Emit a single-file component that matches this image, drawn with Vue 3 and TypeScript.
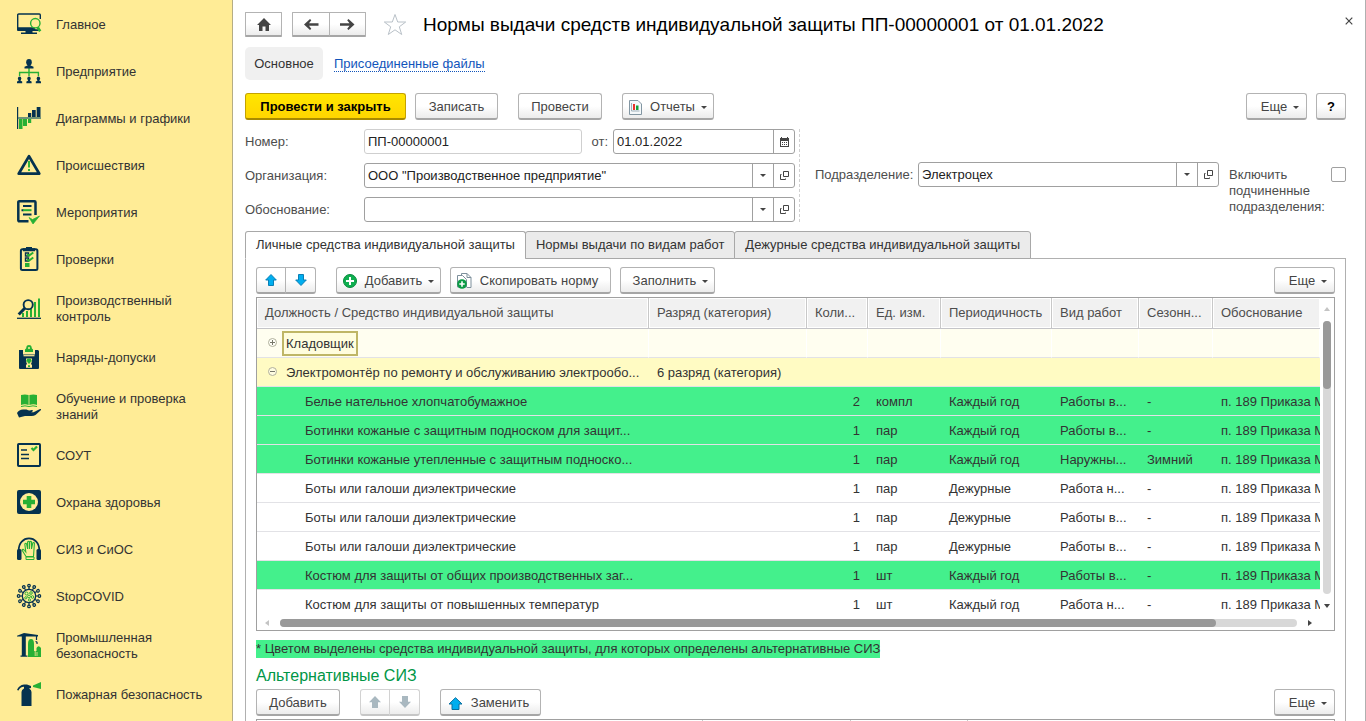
<script setup lang="ts">
import { ref } from 'vue'

interface NavItem { label: string; icon: string }
interface Row {
  name: string
  rank?: string
  qty?: string
  unit?: string
  period?: string
  work?: string
  season?: string
  kind: 'current' | 'group' | 'marked' | 'plain'
  toggle?: 'plus' | 'minus'
}

const N = '#05324f'
const G = '#27b034'

const person = (x: number) =>
  `<g fill="${N}"><ellipse cx="${x}" cy="19.500" rx="1.700" ry="2"/><path d="M${x - 1} 20.500h2v1.200l1.600 .8V24.300h-5.200v-1.800l1.600-.8z"/></g>`

const spikes = Array.from({ length: 12 }, (_, i) =>
  `<g transform="rotate(${i * 30} 12 12)"><path d="M12 5V3" stroke="${N}" stroke-width="1.2"/><circle cx="12" cy="1.6" r="1.3" fill="none" stroke="${N}" stroke-width="1.2"/></g>`).join('')

const nav: NavItem[] = [
  { label: 'Главное', icon: `<path d="M.7 16V3a1 1 0 0 1 1-1h20.600a1 1 0 0 1 1 1v4" fill="none" stroke="${N}" stroke-width="1.400"/><path d="M0 15.200h17l1.500 2H22v.8a1 1 0 0 1-1 1H1a1 1 0 0 1-1-1z" fill="${N}"/><path d="M8.500 19h7v1.500H20V22H4v-1.500h4.500z" fill="${N}"/><circle cx="18.300" cy="11.200" r="4.700" fill="none" stroke="${G}" stroke-width="1.400"/><path d="M20.800 15.500l2.400 3.800" stroke="${G}" stroke-width="2.600"/>` },
  { label: 'Предприятие', icon: `<path d="M12 9v8M2.600 17v-3.500h18.800V17" fill="none" stroke="${G}" stroke-width="1.400"/><g fill="${N}"><ellipse cx="12" cy="3.200" rx="2.800" ry="3.200"/><path d="M10.500 4h3v2.600l3 1.200V9.600h-9V7.800l3-1.200z"/></g>${person(2.6)}${person(12)}${person(21.4)}` },
  { label: 'Диаграммы и графики', icon: `<path d="M.6 1v22" stroke="${N}" stroke-width="1.200"/><path d="M11 7h3.200v4H11zM15 4h3.700v7H15zM19.700 1H23.500v10h-3.800z" fill="${N}"/><path d="M2 13h3.500v10H2zM6 13h4v7H6zM11 13h3.200v4H11z" fill="${G}"/><path d="M1 12h23" stroke="#6f9377" stroke-width="2"/>` },
  { label: 'Происшествия', icon: `<path d="M12 3.200L22.300 20.700H1.700z" fill="none" stroke="${N}" stroke-width="2.700" stroke-linejoin="round"/><path d="M12 8v6.500M12 16v2" stroke="${G}" stroke-width="1.900"/>` },
  { label: 'Мероприятия', icon: `<path d="M11.500 21.300H2.300a1 1 0 0 1-1-1V2.200a1 1 0 0 1 1-1h15.200a1 1 0 0 1 1 1V15" fill="none" stroke="${N}" stroke-width="2.500"/><path d="M6 6h8.500M4.500 10.200h2M6 14.500h8.500" stroke="${N}" stroke-width="2"/><path d="M6 10.200h8.500" stroke="${G}" stroke-width="2"/><path d="M12 17.500l3.500 2 7-3.500-6.500 8z" fill="${G}" stroke="${G}" stroke-width=".7"/>` },
  { label: 'Проверки', icon: `<rect x="3.900" y="2.200" width="16.500" height="20.800" rx="1.500" fill="none" stroke="${N}" stroke-width="2"/><path d="M9 0h6v1.200h3v3H6v-3h3z" fill="${N}"/><path d="M8.500 6h3v3h-3zM8.500 11h3v3h-3z" fill="none" stroke="${N}" stroke-width="1.400"/><path d="M10 7.300l1.800 1.500 4.500-3.300M10 12.300l1.800 1.500 4.500-3.300" fill="none" stroke="${G}" stroke-width="2"/><path d="M8 16h4.500v4H8z" fill="${G}"/>` },
  { label: 'Производственный контроль', icon: `<path d="M6 17v4M10 15v6M14 12v9M18 6v15M22 2.500v18.500" stroke="${G}" stroke-width="2"/><path d="M0 22.300h24" stroke="${N}" stroke-width="1.300"/><circle cx="11.200" cy="8.700" r="4.600" fill="#ffec96" stroke="${N}" stroke-width="1.900"/><path d="M8 12l-6.300 6.500" stroke="${N}" stroke-width="3"/>` },
  { label: 'Наряды-допуски', icon: `<path d="M2 5h4v4.500h12V5h3l1 1v17a1 1 0 0 1-1 1H3a1 1 0 0 1-1-1z" fill="${N}"/><path d="M6.500 10.700h11" stroke="#ffec96" stroke-width="1.200"/><path d="M9 13.500h6v3l-1 2.500 1 1V22.800H9V20l1-1-1-2.500z" fill="#ffec96"/><path d="M9.300 16c0-3.300 5.400-3.300 5.400 0v.8h-1.200l-.5 1.700h-2l-.5-1.700H9.300zM11 20.300h2v1.700h-2zM8 7V4.500C8.500 3.500 9.300 4 9.300 2.500c0-3.300 5.400-3.300 5.400 0 0 1.500.8 1 1.300 2V7z" fill="${G}"/><circle cx="12" cy="3" r="1" fill="#ffec96"/>` },
  { label: 'Обучение и проверка знаний', icon: `<path d="M4 1q4-1.200 7.600 0v10q-3.600-1.500-7.600 0zM12.400 1q4-1.200 7.600 0v10q-3.600-1.500-7.600 0z" fill="${G}"/><path d="M4 12.500q4-1.300 8 0 4-1.300 8 0" fill="none" stroke="${G}"/><path d="M0 19q2-3.500 6-3.500h3.500q2.500 1.500 5.500.5c1.500 0 1 2-1 2.200h-3 5.500l6-3q2-.5 1.500.8l-5.500 5q-1.500 1-4 1H8l-6 1.500z" fill="${N}"/>` },
  { label: 'СОУТ', icon: `<rect x="1" y="1" width="22" height="22" rx=".8" fill="none" stroke="${N}" stroke-width="2"/><path d="M4 7h6M4 11.500h8M4 15.500h8" stroke="${N}" stroke-width="1.600"/><path d="M14.500 5l2 2 3.500-3.500" fill="none" stroke="${G}" stroke-width="2.200"/>` },
  { label: 'Охрана здоровья', icon: `<rect width="24" height="24" rx="2" fill="${N}"/><circle cx="12" cy="12" r="9" fill="#ffec96"/><path d="M9.700 6h4.600v3.700H18v4.600h-3.700V18H9.700v-3.700H6V9.700h3.700z" fill="${G}"/>` },
  { label: 'СИЗ и СиОС', icon: `<path d="M1.700 14C1 -2.800 23 -2.800 22.300 14" fill="none" stroke="${N}" stroke-width="1.700"/><rect y="12" width="4.500" height="11" rx="1.500" fill="${N}"/><rect x="19.500" y="12" width="4.500" height="11" rx="1.500" fill="${N}"/><path d="M9 19.500L5 13q1-1.500 2.500.5l1.300 1.500L7.800 7q1-1.500 1.800 0l1 5V5q1-1.500 1.800 0v7l.4-7q1-1.500 1.700 0v7l1.300-6q1-1 1.600.3L16.500 19.500z" fill="none" stroke="${G}" stroke-width="1.100"/><path d="M9 20h8v2.500H9z" fill="none" stroke="${G}"/>` },
  { label: 'StopCOVID', icon: `${spikes}<circle cx="12" cy="12" r="6.700" fill="none" stroke="${N}" stroke-width="1.300"/><g fill="none" stroke="${G}" stroke-width="1"><circle cx="9.500" cy="9.500" r="1.500"/><circle cx="14" cy="9" r="1.300"/><circle cx="12" cy="12.500" r="1.400"/><circle cx="8.800" cy="13.800" r="1.100"/><circle cx="15.500" cy="13" r="1.300"/><circle cx="12.500" cy="16" r="1.100"/></g>` },
  { label: 'Промышленная безопасность', icon: `<path d="M0 2.700L7 0 21 2v1.500H0zM4.800 3.300h4V23h-4z" fill="${N}"/><path d="M3.500 23.200h7M19.500 3v4M18.500 8.500q2 0 1.500 2.500" fill="none" stroke="${N}" stroke-width="1.200"/><path d="M11 24V11q0-5 3-5t3 5v7h2.500v-3q2-3.500 4.500 0v9z" fill="${G}"/><path d="M18.200 17v6M20 19v4" stroke="#ffec96" stroke-width=".8"/>` },
  { label: 'Пожарная безопасность', icon: `<path d="M4.500 24V10q0-2.500 2.500-3.500V4.800Q3 5 1.500 8.500L0 8Q2 3 7 2.500h3L14 4v2l-2 .5q2.500 1 2.500 3.500v14z" fill="${N}"/><path d="M16 3.500L24 0v7L16 5z" fill="${G}"/>` }
]

const rows: Row[] = [
  { name: 'Кладовщик', kind: 'current', toggle: 'plus' },
  { name: 'Электромонтёр по ремонту и обслуживанию электрообо...', rank: '6 разряд (категория)', kind: 'group', toggle: 'minus' },
  { name: 'Белье нательное хлопчатобумажное', qty: '2', unit: 'компл', period: 'Каждый год', work: 'Работы в...', season: '-', kind: 'marked' },
  { name: 'Ботинки кожаные с защитным подноском для защит...', qty: '1', unit: 'пар', period: 'Каждый год', work: 'Работы в...', season: '-', kind: 'marked' },
  { name: 'Ботинки кожаные утепленные с защитным подноско...', qty: '1', unit: 'пар', period: 'Каждый год', work: 'Наружны...', season: 'Зимний', kind: 'marked' },
  { name: 'Боты или галоши диэлектрические', qty: '1', unit: 'пар', period: 'Дежурные', work: 'Работа н...', season: '-', kind: 'plain' },
  { name: 'Боты или галоши диэлектрические', qty: '1', unit: 'пар', period: 'Дежурные', work: 'Работы в...', season: '-', kind: 'plain' },
  { name: 'Боты или галоши диэлектрические', qty: '1', unit: 'пар', period: 'Дежурные', work: 'Работы в...', season: '-', kind: 'plain' },
  { name: 'Костюм для защиты от общих производственных заг...', qty: '1', unit: 'шт', period: 'Каждый год', work: 'Работы в...', season: '-', kind: 'marked' },
  { name: 'Костюм для защиты от повышенных температур', qty: '1', unit: 'шт', period: 'Каждый год', work: 'Работа н...', season: '-', kind: 'plain' }
]
const basisText = 'п. 189 Приказа М'

const docNumber = ref('ПП-00000001')
const docDate = ref('01.01.2022')
const organization = ref('ООО "Производственное предприятие"')
const reason = ref('')
const department = ref('Электроцех')
const includeChildren = ref(false)
</script>

<template>
  <div class="app">
    <nav class="side">
      <a v-for="item in nav" :key="item.label" href="#" class="side-item">
        <svg class="side-icon" viewBox="0 0 24 24" v-html="item.icon"></svg>
        <span>{{ item.label }}</span>
      </a>
    </nav>

    <main class="main">
      <header class="head">
        <button class="btn home" aria-label="Начальная страница">
          <svg width="14" height="13" viewBox="0 0 14 13"><path d="M7 0l7 7h-2v6H8.500V8.500h-3V13H2V7H0z" fill="#444" /></svg>
        </button>
        <div class="pair">
          <button class="btn" aria-label="Назад">
            <svg width="15" height="11" viewBox="0 0 15 11"><path d="M0 5.500L6 0l1.300 1.300-2.300 3H14.500v2.400H5l2.300 3L6 11z" fill="#444" /></svg>
          </button>
          <button class="btn" aria-label="Вперед">
            <svg width="15" height="11" viewBox="0 0 15 11"><path d="M14.500 5.500L8.500 0 7.200 1.300l2.300 3H0v2.400h9.500l-2.300 3L8.500 11z" fill="#444" /></svg>
          </button>
        </div>
        <button class="bare star" aria-label="В избранное">
          <svg width="24" height="23" viewBox="0 0 24 23"><path d="M12 1.500l2.700 7.500h8l-6.400 4.800 2.400 7.700-6.700-4.700-6.700 4.700 2.400-7.700L1.300 9h8z" fill="#fff" stroke="#b9c1c8" /></svg>
        </button>
        <h1>Нормы выдачи средств индивидуальной защиты ПП-00000001 от 01.01.2022</h1>
        <button class="bare close" aria-label="Закрыть">
          <svg width="8" height="8" viewBox="0 0 8 8"><path d="M.7.7l6.600 6.600M7.300.7L.7 7.300" stroke="#444" stroke-width="1.200" /></svg>
        </button>
      </header>

      <div class="sections">
        <span class="section-on">Основное</span>
        <a href="#">Присоединенные файлы</a>
      </div>

      <div class="bar commands">
        <button class="btn primary">Провести и закрыть</button>
        <button class="btn save">Записать</button>
        <button class="btn apart post">Провести</button>
        <button class="btn apart reports">
          <svg width="13" height="15" viewBox="0 0 13 15"><path d="M.5.500h8.500l3.500 3.500v10.500H.5z" fill="#f4f8fa" stroke="#8296a2" /><path d="M2.500 3v8h8" fill="none" stroke="#9fb0ba" /><path d="M4 4h2v6H4z" fill="#e8332a" /><path d="M7 5.500h2.500V10H7z" fill="#17a13a" /></svg>
          Отчеты<i class="caret"></i>
        </button>
        <span class="fill"></span>
        <button class="btn more">Еще<i class="caret"></i></button>
        <button class="btn help">?</button>
      </div>

      <div class="form">
        <div class="form-left">
          <div class="line">
            <label class="lbl" for="num">Номер:</label>
            <div class="field soft number"><input id="num" v-model="docNumber" type="text"></div>
            <label class="from" for="date">от:</label>
            <div class="field date">
              <input id="date" v-model="docDate" type="text">
              <button aria-label="Календарь">
                <svg width="9" height="10" viewBox="0 0 9 10"><path d="M1 0h1v1h5V0h1v1h1v9H0V1h1z" fill="#444" /><path d="M1 4h7v5H1z" fill="#fff" /><path d="M2 5h1v1H2zM4 5h1v1H4zM6 5h1v1H6zM2 7h1v1H2zM4 7h1v1H4zM6 7h1v1H6z" fill="#444" /></svg>
              </button>
            </div>
          </div>
          <div class="line">
            <label class="lbl" for="org">Организация:</label>
            <div class="field grow">
              <input id="org" v-model="organization" type="text">
              <button aria-label="Выбрать"><i class="caret"></i></button>
              <button aria-label="Открыть"><svg width="9" height="9" viewBox="0 0 9 9"><path d="M3.500.5h5v5h-5zM1.500 3.500h-1v5h5v-1" fill="none" stroke="#444" /></svg></button>
            </div>
          </div>
          <div class="line">
            <label class="lbl" for="reason">Обоснование:</label>
            <div class="field grow">
              <input id="reason" v-model="reason" type="text">
              <button aria-label="Выбрать"><i class="caret"></i></button>
              <button aria-label="Открыть"><svg width="9" height="9" viewBox="0 0 9 9"><path d="M3.500.5h5v5h-5zM1.500 3.500h-1v5h5v-1" fill="none" stroke="#444" /></svg></button>
            </div>
          </div>
        </div>
        <div class="form-right">
          <label class="dep" for="dep">Подразделение:</label>
          <div class="field grow">
            <input id="dep" v-model="department" type="text">
            <button aria-label="Выбрать"><i class="caret"></i></button>
            <button aria-label="Открыть"><svg width="9" height="9" viewBox="0 0 9 9"><path d="M3.500.5h5v5h-5zM1.500 3.500h-1v5h5v-1" fill="none" stroke="#444" /></svg></button>
          </div>
          <label class="include" for="include">Включить подчиненные подразделения:</label>
          <input id="include" v-model="includeChildren" class="check" type="checkbox">
        </div>
      </div>

      <div class="tabs" role="tablist">
        <button role="tab" aria-selected="true" class="tab on">Личные средства индивидуальной защиты</button>
        <button role="tab" aria-selected="false" class="tab">Нормы выдачи по видам работ</button>
        <button role="tab" aria-selected="false" class="tab">Дежурные средства индивидуальной защиты</button>
      </div>

      <section class="panel">
        <div class="bar">
          <div class="pair narrow">
            <button class="btn" aria-label="Вверх"><svg width="12" height="12" viewBox="0 0 12 12"><path d="M6 .5L11.300 6H8.500v5.500h-5V6H.7z" fill="#00aeef" stroke="#0a7fb5" /></svg></button>
            <button class="btn" aria-label="Вниз"><svg width="12" height="12" viewBox="0 0 12 12"><path d="M6 11.500L.7 6h2.800V.500h5V6h2.800z" fill="#00aeef" stroke="#0a7fb5" /></svg></button>
          </div>
          <button class="btn apart add">
            <svg width="14" height="14" viewBox="0 0 14 14"><circle cx="7" cy="7" r="6.500" fill="#0faf50" stroke="#078a3c" /><path d="M7 3v8M3 7h8" stroke="#fff" stroke-width="2" /></svg>
            Добавить<i class="caret"></i>
          </button>
          <button class="btn copy">
            <svg width="15" height="16" viewBox="0 0 15 16"><path d="M4.500 2.500V.500h5.500l4 4v10h-4" fill="#fff" stroke="#7d8f9b" /><path d="M10 .5v4h4" fill="none" stroke="#7d8f9b" /><path d="M.5 14V2.500h5l4 4V14z" fill="#fff" stroke="#7d8f9b" /><circle cx="5" cy="11" r="4.800" fill="#0b9b45" /><path d="M5 8.300v5.400M2.300 11h5.400" stroke="#fff" stroke-width="1.600" /></svg>
            Скопировать норму
          </button>
          <button class="btn fillbtn">Заполнить<i class="caret"></i></button>
          <span class="fill"></span>
          <button class="btn more">Еще<i class="caret"></i></button>
        </div>

        <div class="grid">
          <div class="grid-body">
            <table>
              <colgroup>
                <col><col class="c-rank"><col class="c-qty"><col class="c-unit"><col class="c-period"><col class="c-work"><col class="c-season"><col class="c-basis">
              </colgroup>
              <thead>
                <tr>
                  <th>Должность / Средство индивидуальной защиты</th>
                  <th>Разряд (категория)</th>
                  <th>Коли...</th>
                  <th>Ед. изм.</th>
                  <th>Периодичность</th>
                  <th>Вид работ</th>
                  <th>Сезонн...</th>
                  <th>Обоснование</th>
                </tr>
              </thead>
              <tbody>
                <tr v-for="(row, i) in rows" :key="i" :class="row.kind">
                  <td :class="row.toggle ? 'parent' : 'child'">
                    <button v-if="row.toggle" class="bare toggle" :aria-label="row.toggle === 'plus' ? 'Развернуть' : 'Свернуть'">
                      <svg width="9" height="9" viewBox="0 0 9 9">
                        <circle cx="4.500" cy="4.500" r="4" fill="#fff" fill-opacity=".5" stroke="#b0b09c" />
                        <path :d="row.toggle === 'plus' ? 'M2 4.500h5M4.500 2v5' : 'M2 4.500h5'" stroke="#77776a" />
                      </svg>
                    </button>
                    <span class="name">{{ row.name }}</span>
                  </td>
                  <td>{{ row.rank }}</td>
                  <td class="num">{{ row.qty }}</td>
                  <td>{{ row.unit }}</td>
                  <td>{{ row.period }}</td>
                  <td>{{ row.work }}</td>
                  <td>{{ row.season }}</td>
                  <td class="basis">{{ row.toggle ? '' : basisText }}</td>
                </tr>
              </tbody>
            </table>
            <div class="vscroll">
              <i class="tri up"></i>
              <div class="vtrack"><div class="vthumb"></div></div>
              <i class="tri down"></i>
            </div>
          </div>
          <div class="hscroll">
            <i class="tri left"></i>
            <div class="htrack"><div class="hthumb"></div></div>
            <i class="tri right"></i>
          </div>
        </div>

        <p class="note"><span>* Цветом выделены средства индивидуальной защиты, для которых определены альтернативные СИЗ</span></p>
        <h2>Альтернативные СИЗ</h2>

        <div class="bar">
          <button class="btn post">Добавить</button>
          <div class="pair narrow apart">
            <button class="btn" disabled aria-label="Вверх"><svg width="12" height="12" viewBox="0 0 12 12"><path d="M6 0l6 6.200H9V12H3V6.200H0z" fill="#a9b8c0" /></svg></button>
            <button class="btn" disabled aria-label="Вниз"><svg width="12" height="12" viewBox="0 0 12 12"><path d="M6 12L0 5.800h3V0h6v5.800h3z" fill="#a9b8c0" /></svg></button>
          </div>
          <button class="btn apart replace">
            <svg width="15" height="13" viewBox="0 0 15 13"><path d="M7.500.7L14 7h-3v5.500H4V7H1z" fill="#00aeef" stroke="#0a6f9f" /></svg>
            Заменить
          </button>
          <span class="fill"></span>
          <button class="btn more">Еще<i class="caret"></i></button>
        </div>
        <div class="grid second"><span></span><span></span><span></span><span></span></div>
      </section>
    </main>
  </div>
</template>

<style>
body { margin: 0; overflow: hidden; }
</style>

<style scoped>
.app {
  display: flex;
  height: 100vh;
  overflow: hidden;
  background: #fff;
  color: #333;
  font: 13px/16px "Liberation Sans", Arial, sans-serif;
}
.app * { box-sizing: border-box; }
button, input { font: inherit; color: inherit; margin: 0; }
svg { display: block; flex: none; }

.side {
  flex: none;
  width: 233px;
  padding-top: 1px;
  background: #ffec96;
  border-right: 1px solid #b5ad85;
}
.side-item {
  display: flex;
  align-items: center;
  gap: 15px;
  min-height: 47px;
  padding: 10px 20px 9px 17px;
  color: #333;
  text-decoration: none;
}
.side-icon { width: 24px; height: 24px; margin-bottom: 2px; overflow: visible; }

.main {
  flex: 1;
  min-width: 0;
  display: flex;
  flex-direction: column;
  padding: 12px 19px 0 12px;
  border-right: 1px solid #b0b0b0;
}

.btn {
  display: inline-flex;
  align-items: center;
  justify-content: center;
  height: 27px;
  padding: 2px 0 0;
  background: linear-gradient(#fff 50%, #ececec);
  border: 1px solid #b3b3b3;
  border-bottom: 2px solid #a6a6a6;
  border-radius: 3px;
  color: #444;
  white-space: nowrap;
}
.bare { padding: 0; border: 0; background: none; }
.caret {
  flex: none;
  width: 0;
  height: 0;
  border: 3px solid transparent;
  border-top-color: #444;
  border-bottom: 0;
}
.btn .caret { margin-left: 6px; }

.head { display: flex; align-items: center; height: 25px; }
.head .btn { height: 25px; padding: 0; border-radius: 1px; }
.head .home { width: 37px; }
.pair { display: flex; }
.pair .btn { width: 38px; padding: 0; }
.pair .btn + .btn { width: 37px; margin-left: -1px; }
.pair .btn:first-child { border-top-right-radius: 0; border-bottom-right-radius: 0; }
.pair .btn:last-child { border-top-left-radius: 0; border-bottom-left-radius: 0; }
.head .pair { margin-left: 10px; }
.star { margin-left: 17px; }
h1 {
  flex: 1;
  margin: 0 0 0 16px;
  color: #000;
  font-size: 19px;
  line-height: 25px;
  font-weight: 400;
  white-space: nowrap;
}
.close { align-self: flex-start; margin-right: -12px; padding: 5px; }

.sections { display: flex; align-items: center; gap: 11px; margin-top: 10px; }
.section-on { width: 78px; padding: 9px 0 8px; background: #f0f0f0; border-radius: 5px; text-align: center; }
.sections a { color: #1155bb; text-decoration: none; border-bottom: 1px dotted #1155bb; line-height: 15px; }

.bar { display: flex; align-items: center; gap: 9px; }
.bar .apart { margin-left: 11px; }
.fill { flex: 1; }
.commands { margin-top: 13px; }
.primary {
  width: 161px;
  background: linear-gradient(#ffe600, #ffd500);
  border-color: #c4a200;
  border-bottom-color: #a88a00;
  color: #000;
  font-weight: 700;
}
.save { width: 83px; }
.post { width: 84px; }
.reports { width: 92px; }
.reports svg { margin-right: 8px; }
.more { width: 61px; padding-left: 7px; }
.help { width: 30px; color: #000; font-weight: 700; }

.form {
  display: grid;
  grid-template-columns: minmax(0, 555fr) minmax(0, 546fr);
  margin-top: 9px;
  color: #4d4d4d;
}
.form-left {
  display: flex;
  flex-direction: column;
  gap: 9px;
  padding-right: 4px;
  border-right: 1px dashed #d0d0d0;
}
.line { display: flex; align-items: center; }
.lbl { flex: none; width: 119px; }
.field {
  display: flex;
  height: 25px;
  border: 1px solid #a0a0a0;
  border-radius: 3px;
  background: #fff;
}
.field.soft { border-color: #cfcfcf; }
.field input {
  flex: 1;
  min-width: 0;
  padding: 0 3px;
  border: 0;
  outline: 0;
  background: none;
  color: #222;
}
.field button {
  display: flex;
  align-items: center;
  justify-content: center;
  flex: none;
  width: 21px;
  padding: 0;
  border: 0;
  border-left: 1px solid #a0a0a0;
  background: none;
}
.grow { flex: 1; min-width: 0; }
.number { flex: 218 1 0; min-width: 0; }
.from { margin: 0 5px 0 10px; }
.date { flex: 182 1 0; min-width: 0; }
.form-right {
  display: flex;
  align-items: flex-start;
  margin: 33px 0 0 15px;
}
.dep { flex: none; width: 103px; margin-top: 5px; }
.include { flex: none; width: 102px; margin: 5px 0 0 10px; }
.check {
  appearance: none;
  flex: none;
  width: 15px;
  height: 15px;
  margin-top: 5px;
  border: 1px solid #a0a0a0;
  border-radius: 2px;
}

.tabs { display: flex; position: relative; margin-top: 9px; }
.tab {
  height: 28px;
  margin: 0 0 0 -1px;
  padding: 0 10px;
  background: #ebebeb;
  border: 1px solid #a8a8a8;
  border-radius: 3px 3px 0 0;
  white-space: nowrap;
}
.tab.on { margin: 0; background: #fff; border-bottom-color: #fff; }

.panel {
  flex: 1;
  min-height: 0;
  margin-top: -1px;
  padding: 8px 10px 0;
  border: 1px solid #b0b0b0;
  border-bottom: 0;
}
.narrow .btn { width: 30px; }
.narrow .btn + .btn { width: 31px; }
.narrow .btn:disabled { border-color: #d2d2d2; border-bottom-color: #c6c6c6; }
.add { width: 105px; }
.add svg, .replace svg { margin-right: 8px; }
.copy { width: 161px; padding-right: 6px; }
.copy svg { margin-right: 8px; }
.fillbtn { width: 95px; padding-left: 6px; }
.replace { width: 101px; padding-right: 4px; }

.grid { margin-top: 3px; border: 1px solid #a0a0a0; }
.grid-body { display: flex; }
table { flex: 1; width: 100%; min-width: 0; table-layout: fixed; border-collapse: separate; border-spacing: 0; }
.c-rank { width: 158px; }
.c-qty { width: 61px; }
.c-unit { width: 73px; }
.c-period { width: 111px; }
.c-work { width: 87px; }
.c-season { width: 74px; }
.c-basis { width: 107px; }
th, td { padding: 0 8px; overflow: hidden; white-space: nowrap; text-align: left; font-weight: 400; }
th {
  height: 31px;
  background: #f1f1f1;
  border-right: 1px solid #c8c8c8;
  border-bottom: 1px solid #c4c4c8;
  box-shadow: inset 0 0 0 1px #fff;
  color: #4d4d4d;
}
th:last-child { border-right: 0; }
td { height: 29px; padding-top: 2px; border-bottom: 1px solid #e2e2e6; }
tbody tr:last-child td { border-bottom-color: transparent; }
.current td { background: #fffef0; border-right: 1px solid #fff; }
.group td { background: #fffbc3; }
.marked td { background: #44f08c; }
.num { text-align: right; }
.basis { padding-right: 0; }
.toggle { display: inline-block; margin: 0 9px 0 3px; vertical-align: 1px; }
.name { display: inline-block; }
.current td.parent { padding-top: 0; }
.child { padding-left: 48px; }
.current .name {
  margin-left: -4px;
  padding: 3px 2px 2px;
  border: 2px solid #bfb666;
  background: #fffdde;
}

.vscroll { flex: none; width: 14px; display: flex; flex-direction: column; align-items: center; padding: 9px 0 11px; }
.vtrack { flex: 1; width: 8px; margin: 10px 0 10px; background: #d8d8d8; border-radius: 4px; }
.vthumb { height: 25%; background: #999; border-radius: 4px; }
.hscroll { display: flex; align-items: center; height: 11px; padding: 0 22px 3px 8px; }
.htrack { flex: 1; height: 8px; margin: 0 11px; background: #d8d8d8; border-radius: 4px; }
.hthumb { width: 92%; height: 8px; background: #999; border-radius: 4px; }
.tri { width: 0; height: 0; border: 3px solid transparent; }
.tri.up { border-top: 0; border-bottom: 4px solid #c4c4c4; }
.tri.down { border-bottom: 0; border-top: 4px solid #444; }
.tri.left { border-left: 0; border-right: 4px solid #c4c4c4; }
.tri.right { border-right: 0; border-left: 4px solid #444; }

.note { margin: 9px 0 0; line-height: 18px; }
.note span { display: inline-block; background: #44f08c; }
h2 { margin: 9px 0 4px; color: #009646; font-size: 16px; line-height: 18px; font-weight: 400; }
.second { display: grid; grid-template-columns: 445fr 148fr 117fr 367fr; height: 34px; }
.second span + span { border-left: 1px solid #c8c8c8; }
</style>
